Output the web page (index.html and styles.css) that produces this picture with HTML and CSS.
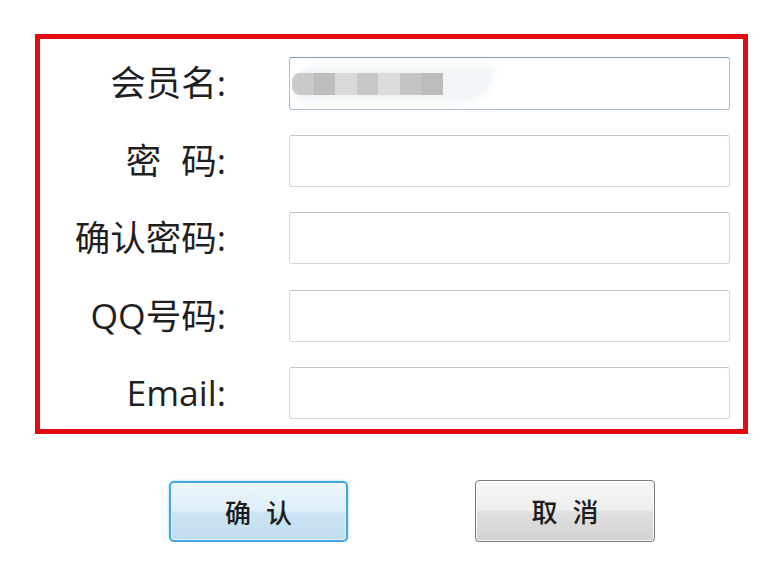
FILE: index.html
```html
<!DOCTYPE html>
<html lang="zh-CN">
<head>
<meta charset="utf-8">
<title>会员注册</title>
<link rel="stylesheet" href="styles.css">
</head>
<body>
<form class="reg-box">
  <label class="lbl">会员名:</label>
  <div class="field focused">
    <span class="smear"></span>
    <span class="blur-row">
      <span class="b b1"></span><span class="b b2"></span><span class="b b3"></span><span class="b b4"></span><span class="b b5"></span><span class="b b6"></span><span class="b b7"></span>
    </span>
  </div>
  <label class="lbl">密<span class="gap"></span>码:</label>
  <div class="field"></div>
  <label class="lbl">确认密码:</label>
  <div class="field"></div>
  <label class="lbl">QQ号码:</label>
  <div class="field"></div>
  <label class="lbl">Email:</label>
  <div class="field"></div>
</form>
<div class="actions">
  <button type="button" class="btn btn-ok">确认</button>
  <button type="button" class="btn btn-cancel">取消</button>
</div>
</body>
</html>
```
FILE: styles.css
```css
html, body {
  margin: 0;
  padding: 0;
  background: #ffffff;
}

body {
  font-family: "Open Sans", "Noto Sans CJK SC", sans-serif;
  color: #232323;
}

.reg-box {
  box-sizing: border-box;
  width: 713px;
  height: 400px;
  margin: 34px 0 0 35px;
  border: 5px solid #e30b12;
  padding: 18px 13px 10px 0;
  display: grid;
  grid-template-columns: 186px 441px;
  column-gap: 63px;
  row-gap: 25.5px;
  grid-auto-rows: 52px;
  align-items: center;
}

.lbl {
  font-size: 35.5px;
  line-height: 1;
  text-align: right;
  white-space: nowrap;
  color: #1f1f1f;
}

.lbl .gap {
  display: inline-block;
  width: 20px;
}

.field {
  position: relative;
  box-sizing: border-box;
  height: 52px;
  border: 1px solid #d9d9d9;
  border-top-color: #c4c4c4;
  border-radius: 3px;
  background: #ffffff;
  overflow: hidden;
}

.field.focused {
  border-color: #a9c0d3;
  border-top-color: #7f9db6;
  height: 53px;
}

.smear {
  position: absolute;
  left: 4px;
  top: 8px;
  width: 200px;
  height: 36px;
  border-radius: 20px 4px 30px 10px;
  background: #f1f5f7;
  filter: blur(3px);
}

.blur-row {
  position: absolute;
  left: 2px;
  top: 15px;
  display: flex;
  filter: blur(0.6px);
}

.b {
  display: block;
  width: 21.6px;
  height: 22px;
}

.b1 { background: #cacaca; border-radius: 8px 0 0 8px; }
.b2 { background: #bdbdbd; }
.b3 { background: #d9d9d9; }
.b4 { background: #c7c7c7; }
.b5 { background: #dcdcdc; }
.b6 { background: #c4c4c4; }
.b7 { background: #bcbcbc; }

.actions {
  display: flex;
  align-items: flex-start;
  gap: 127px;
  margin: 46px 0 0 169px;
}

.btn {
  box-sizing: border-box;
  font-family: "Noto Sans CJK SC", sans-serif;
  font-size: 26px;
  font-weight: 500;
  line-height: 1;
  letter-spacing: 15px;
  padding: 0 0 0 15px;
  color: #1c1c1c;
  cursor: pointer;
  display: flex;
  align-items: center;
  justify-content: center;
}

.btn-ok {
  width: 179px;
  height: 61px;
  margin-top: 1px;
  border: 2px solid #3fa8dc;
  border-radius: 5px;
  background: linear-gradient(#ecf6fc 0%, #dfeff9 48%, #cce5f4 52%, #bfdcee 100%);
  box-shadow: 0 0 3px #9fd5f0, inset 0 0 0 1px rgba(255, 255, 255, 0.7);
}

.btn-cancel {
  width: 180px;
  height: 62px;
  border: 1px solid #7a7a7a;
  border-radius: 4px;
  background: linear-gradient(#f7f7f7 0%, #eeeeee 48%, #e0e0e0 52%, #d3d3d3 100%);
  box-shadow: inset 0 0 0 1px rgba(255, 255, 255, 0.8);
}
```
